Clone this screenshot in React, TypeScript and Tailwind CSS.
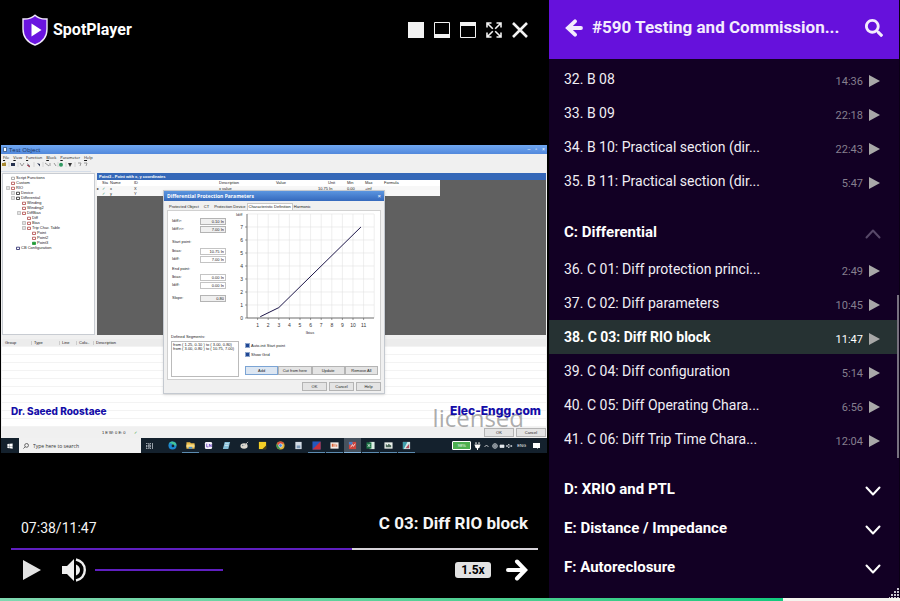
import { useState } from 'react';
import type { ReactNode } from 'react';
import { FaSearch, FaWindows, FaPlug } from 'react-icons/fa';

const lessonsB = [
  { id: 32, title: 'B 08', time: '14:36' },
  { id: 33, title: 'B 09', time: '22:18' },
  { id: 34, title: 'B 10: Practical section (dir...', time: '22:43' },
  { id: 35, title: 'B 11: Practical section (dir...', time: '5:47' },
];

const lessonsC = [
  { id: 36, title: 'C 01: Diff protection princi...', time: '2:49' },
  { id: 37, title: 'C 02: Diff parameters', time: '10:45' },
  { id: 38, title: 'C 03: Diff RIO block', time: '11:47' },
  { id: 39, title: 'C 04: Diff configuration', time: '5:14' },
  { id: 40, title: 'C 05: Diff Operating Chara...', time: '6:56' },
  { id: 41, title: 'C 06: Diff Trip Time Chara...', time: '12:04' },
];

type Lesson = { id: number; title: string; time: string };

function LessonRow({ lesson, active, onSelect }: { lesson: Lesson; active: boolean; onSelect: () => void }) {
  return (
    <li>
      <button
        onClick={onSelect}
        className={
          active
            ? 'flex h-[34px] w-full items-center bg-[#263233] pl-[15px] pr-[19px] text-left font-bold text-white'
            : 'flex h-[34px] w-full items-center pl-[15px] pr-[19px] text-left text-[#f0eef4]'
        }
      >
        <span className="flex-1 truncate text-[14px] leading-5">
          {lesson.id}. {lesson.title}
        </span>
        <span className={active ? 'pt-1.5 text-[11px] font-normal' : 'pt-1.5 text-[11px] text-[#857f8e]'}>{lesson.time}</span>
        <svg className="ml-1.5 mt-1 h-3 w-[11px]" viewBox="0 0 11 12">
          <path d="M0 0L11 6L0 12Z" fill="#a8a8a8" />
        </svg>
      </button>
    </li>
  );
}

function SectionHeader({ title, open = false }: { title: string; open?: boolean }) {
  return (
    <button className="flex h-[39px] w-full items-center justify-between pb-0.5 pl-[15px] pr-[18px] text-left">
      <span className="text-[15px] font-bold leading-5 text-white">{title}</span>
      <svg className="mt-1 h-2.5 w-4" viewBox="0 0 16 10" fill="none" strokeWidth="2" strokeLinecap="round" strokeLinejoin="round">
        {open ? <path d="M1.5 8.5L8 1.5L14.5 8.5" stroke="#574868" /> : <path d="M1.5 1.5L8 8.5L14.5 1.5" stroke="#fff" />}
      </svg>
    </button>
  );
}

function Sidebar() {
  const [current, setCurrent] = useState(38);

  return (
    <aside className="relative flex w-[351px] shrink-0 flex-col overflow-hidden border-r border-[#0a0014] bg-[#120024]">
      <header className="mb-[3px] flex h-[59px] items-center bg-[#6611dc] pb-[3px] pl-4 pr-4 text-[#f3ecfd]">
        <button aria-label="Back">
          <svg className="h-[18px] w-[18px]" viewBox="0 0 18 18" fill="none" stroke="currentColor" strokeWidth="3.8" strokeLinecap="round">
            <path d="M16 9H4M10 2.3L2.9 9L10 15.7" />
          </svg>
        </button>
        <h1 className="flex-1 truncate pb-0.5 pl-[9px] text-[17px] font-bold leading-6">#590 Testing and Commission...</h1>
        <button aria-label="Search">
          <FaSearch className="h-[18px] w-[18px]" />
        </button>
      </header>

      <ul>
        {lessonsB.map((l) => (
          <LessonRow key={l.id} lesson={l} active={l.id === current} onSelect={() => setCurrent(l.id)} />
        ))}
      </ul>
      <section className="mt-[15px]">
        <SectionHeader title="C: Differential" open />
        <ul>
          {lessonsC.map((l) => (
            <LessonRow key={l.id} lesson={l} active={l.id === current} onSelect={() => setCurrent(l.id)} />
          ))}
        </ul>
      </section>
      <section className="mt-[14px]">
        <SectionHeader title="D: XRIO and PTL" />
        <SectionHeader title="E: Distance / Impedance" />
        <SectionHeader title="F: Autoreclosure" />
      </section>

      {/* Scroll thumb */}
      <div className="absolute right-0 top-[295px] h-[163px] w-0.5 bg-[#77717f]" />
      {/* Resize grip */}
      <svg className="absolute bottom-0 right-0 h-2.5 w-2.5" viewBox="0 0 10 10" fill="#c9c6cf">
        <path d="M8 0h2v2H8zM5 3h2v2H5zM8 3h2v2H8zM2 6h2v2H2zM5 6h2v2H5zM8 6h2v2H8zM0 9h1v1H0zM2 9h2v1H2zM5 9h2v1H5zM8 9h2v1H8z" />
      </svg>
    </aside>
  );
}

/* ---------- Recorded desktop shown in the video ---------- */

const tree = [
  { label: 'Script Functions', pad: 'pl-[7px]', color: '#999999' },
  { label: 'Custom', pad: 'pl-[7px]', color: '#b04848' },
  { label: 'RIO', pad: 'pl-[7px]', box: true, color: '#b04848' },
  { label: 'Device', pad: 'pl-[12px]', box: true, color: '#222222' },
  { label: 'Differential', pad: 'pl-[12px]', box: true, color: '#222222' },
  { label: 'Winding', pad: 'pl-[18px]', color: '#b04848' },
  { label: 'Winding2', pad: 'pl-[18px]', color: '#b04848' },
  { label: 'DiffBias', pad: 'pl-[18px]', box: true, color: '#b04848' },
  { label: 'Diff', pad: 'pl-[23px]', color: '#b04848' },
  { label: 'Bias', pad: 'pl-[23px]', box: true, color: '#b04848' },
  { label: 'Trip Char. Table', pad: 'pl-[23px]', box: true, color: '#b04848' },
  { label: 'Point', pad: 'pl-[28px]', color: '#b04848' },
  { label: 'Point2', pad: 'pl-[28px]', color: '#b04848' },
  { label: 'Point3', pad: 'pl-[28px]', color: '#1f9a35' },
  { label: 'CB Configuration', pad: 'pl-[12px]', color: '#222266' },
];

function TreeNode({ label, pad, box, color }: { label: string; pad: string; box?: boolean; color: string }) {
  return (
    <li className={`flex h-[5px] items-center ${pad}`}>
      <svg className="-ml-1 mr-px h-1 w-[9px] shrink-0" viewBox="0 0 9 4" fill="none">
        {box && <path d="M.5 .5h3v3h-3zM1 2h2" stroke="#888" strokeWidth=".5" />}
        <path d="M5.5 1.2h3v2.3h-3z" stroke={color} strokeWidth=".8" fill={color === '#1f9a35' ? color : 'none'} />
      </svg>
      {label}
    </li>
  );
}

function Field({ label, value, off }: { label: string; value: string; off?: boolean }) {
  return (
    <label className="flex h-2 items-center justify-between">
      {label}
      <input
        readOnly
        value={value}
        className={
          off
            ? 'h-[7px] w-[26px] border border-[#b4b4b4] bg-[#f0f0f0] pr-px text-right leading-none'
            : 'h-[7px] w-[26px] border border-[#c4c4c4] bg-white pr-px text-right leading-none'
        }
      />
    </label>
  );
}

function TinyButton({ children, className = 'border-[#b4b4b4] bg-[#e4e4e4]' }: { children: ReactNode; className?: string }) {
  return <button className={`flex h-[9px] items-center justify-center border leading-none ${className}`}>{children}</button>;
}

function TinyCheck({ label }: { label: string }) {
  return (
    <label className="flex h-[9px] items-center gap-px">
      <input type="checkbox" defaultChecked className="h-[5px] w-[5px] appearance-none border border-[#8fa6cc] bg-white checked:bg-[#1f4795]" />
      {label}
    </label>
  );
}

function Chart() {
  const px = (v: number) => 13 + v * 10.6;
  const py = (v: number) => 107 - v * 13;
  const xs = [1, 2, 3, 4, 5, 6, 7, 8, 9, 10, 11];
  const ys = [0, 1, 2, 3, 4, 5, 6, 7];
  return (
    <svg className="h-[124px] w-[146px]" viewBox="0 0 146 124" fontSize="5" fill="#333">
      {[...xs, 12].map((v) => (
        <path key={`x${v}`} d={`M${px(v)} 3V107`} stroke="#e2e2e2" strokeWidth=".6" />
      ))}
      {[...ys, 8].map((v) => (
        <path key={`y${v}`} d={`M13 ${py(v)}H140`} stroke="#e2e2e2" strokeWidth=".6" />
      ))}
      <path d="M13 3V107H140" fill="none" stroke="#555" strokeWidth=".8" />
      {xs.map((v) => (
        <g key={v}>
          <path d={`M${px(v)} 107v2`} stroke="#555" strokeWidth=".6" />
          <text x={px(v)} y="116" textAnchor="middle">{v}</text>
        </g>
      ))}
      {ys.map((v) => (
        <g key={v}>
          <path d={`M11 ${py(v)}h2`} stroke="#555" strokeWidth=".6" />
          <text x="9" y={py(v) + 1.5} textAnchor="end">{v}</text>
        </g>
      ))}
      <text x="2" y="5" fontSize="4">Idiff</text>
      <text x="76" y="123" fontSize="4" textAnchor="middle">Ibias</text>
      <path
        d={`M${px(1.25)} ${py(0.1)}L${px(3)} ${py(0.8)}L${px(10.75)} ${py(7)}`}
        fill="none"
        stroke="#1c1548"
        strokeWidth="1"
      />
    </svg>
  );
}

function ParametersDialog() {
  return (
    <div className="absolute left-[162px] top-[45px] w-[222px] border border-[#c4c9d0] bg-[#f0f0f0] text-[4px] leading-none text-[#222] shadow">
      <div className="flex h-[10px] items-center justify-between bg-gradient-to-b from-[#5b95e0] to-[#3569bd] px-[3px] text-white">
        <span className="font-['Open_Sans',sans-serif] text-[5px] font-bold">Differential Protection Parameters</span>
        <span className="text-[6px]">×</span>
      </div>
      <div className="px-[3px]">
        <div className="mt-[2px] flex h-[7px] items-center gap-[5px] whitespace-nowrap pl-[2px]">
          <span>Protected Object</span>
          <span>CT</span>
          <span>Protection Device</span>
          <span className="-mx-1 flex h-[7px] items-center border border-b-0 border-[#c8c8c8] bg-white px-px">Characteristic Definition</span>
          <span>Harmonic</span>
        </div>
        <div className="h-[170px] border border-[#d0d0d0] bg-white">
          <div className="flex justify-between pl-[4px]">
            <div className="w-[54px] pt-[6px]">
              <Field label="Idiff>:" value="0.10 In" off />
              <Field label="Idiff>>:" value="7.00 In" off />
              <p className="mt-[7px] h-[7px]">Start point:</p>
              <Field label="Ibias:" value="10.75 In" />
              <Field label="Idiff:" value="7.00 In" />
              <p className="mt-[4px] h-[6px]">End point:</p>
              <Field label="Ibias:" value="0.00 In" />
              <Field label="Idiff:" value="0.00 In" />
              <div className="mt-[5px]">
                <Field label="Slope:" value="0.80" off />
              </div>
            </div>
            <Chart />
          </div>
          <div className="flex gap-[6px] pl-[3px]">
            <label>
              <span className="block h-[6px]">Defined Segments:</span>
              <textarea
                readOnly
                rows={2}
                value={'from ( 1.25, 0.10 ) to ( 3.00, 0.80)\nfrom ( 3.00, 0.80 ) to ( 10.75, 7.00)'}
                className="block h-9 w-[68px] resize-none overflow-hidden border border-[#bbb] bg-white p-px leading-[4px]"
              />
            </label>
            <div className="flex-1 pt-[6px]">
              <TinyCheck label="Auto-init Start point" />
              <TinyCheck label="Show Grid" />
              <div className="mt-[7px] grid grid-cols-4 pr-[2px]">
                <TinyButton className="border-[#7ba4d4] bg-[#dce6f2]">Add</TinyButton>
                <TinyButton>Cut from here</TinyButton>
                <TinyButton>Update</TinyButton>
                <TinyButton>Remove All</TinyButton>
              </div>
            </div>
          </div>
        </div>
        <div className="grid h-[13px] grid-cols-[25px_25px_25px] content-center justify-end gap-[2px]">
          <TinyButton>OK</TinyButton>
          <TinyButton>Cancel</TinyButton>
          <TinyButton>Help</TinyButton>
        </div>
      </div>
    </div>
  );
}

const taskIcons: { name: string; open?: boolean; active?: boolean; art: ReactNode }[] = [
  { name: 'Edge', art: <><circle cx="5" cy="5" r="4.5" fill="#1e88d2" /><path d="M1 4a4.2 4.2 0 0 1 8.3 1H5a2 2 0 0 0-4-1z" fill="#43c59a" /><circle cx="5.5" cy="5.5" r="1.5" fill="#14212d" /></> },
  { name: 'Explorer', open: true, art: <><path d="M.5 1.5h4l1 1h4v6h-9z" fill="#e9b949" /><path d="M.5 4h9v3h-9z" fill="#f8dc84" /><path d="M3 6.5h4v2H3z" fill="#4c92cf" /></> },
  { name: 'Editor', art: <><rect x="1" y="1" width="8" height="8" rx="1.5" fill="#f4f1fa" /><path d="M3 3v3.500h2M6 6.500v-3l2 3v-3" stroke="#5a31b8" strokeWidth=".8" fill="none" /></> },
  { name: 'Notes', art: <><path d="M3 1h6L7 9H1z" fill="#86bfd8" /><path d="M3.5 3h4M3 5h4" stroke="#e8f4fa" strokeWidth=".7" /></> },
  { name: 'Paint', art: <><ellipse cx="4.5" cy="5.5" rx="4" ry="3" fill="#dcd8cf" /><path d="M5 5L9 1" stroke="#b8b8b8" /><circle cx="3" cy="5" r=".8" fill="#6f8695" /></> },
  { name: 'Sticky', art: <><path d="M1 1h8v8H1z" fill="#f4cf26" /><path d="M9 5v4H5z" fill="#4c3e12" /></> },
  { name: 'Chrome', art: <><circle cx="5" cy="5" r="4.5" fill="#e0b43a" /><path d="M1 3a4.5 4.5 0 0 1 8 0H5L3.5 6z" fill="#db4b3c" /><path d="M1 3l2.5 4L5 9.5A4.5 4.5 0 0 1 1 3z" fill="#369a57" /><circle cx="5" cy="5" r="2" fill="#4a88e0" stroke="#fff" strokeWidth=".6" /></> },
  { name: 'Viewer', art: <><path d="M1.5 1h7v8h-7z" fill="#d3dce5" /><path d="M3 5h4v3H3z" fill="#7997b5" /></> },
  { name: 'Tester', open: true, art: <><path d="M.5.5h9v9h-9z" fill="#2458bd" /><path d="M9.5.5v9h-9z" fill="#c9303b" /></> },
  { name: 'Report', open: true, art: <><path d="M.5 1.5h9v7h-9z" fill="#f5ece6" /><path d="M2 3h2v3.5H2zM5 3h1v3.5H5zM7 4h1v2.5H7z" fill="#d66033" /></> },
  { name: 'Test Object', open: true, active: true, art: <><path d="M1 1h8v8H1z" fill="#d0443c" /><path d="M1 1h4v3H1z" fill="#487fc8" /><path d="M3 7l2-3 1 2 2-3" stroke="#fff" fill="none" strokeWidth=".8" /></> },
  { name: 'Excel', open: true, art: <><path d="M4 1h5.5v8H4z" fill="#dcefe3" /><path d="M.5 1.5H6v7H.5z" fill="#1d7546" /><path d="M2 3.5l2.5 3M4.5 3.5L2 6.5" stroke="#fff" strokeWidth=".8" /></> },
  { name: 'Reader', open: true, art: <><path d="M.5 1.5h9v7h-9z" fill="#e9eee9" /><path d="M2 3l2 2 1-2 3 2v2H2z" fill="#4b6859" /></> },
  { name: 'Scope', open: true, art: <><path d="M1 1h8v8H1z" fill="#cfe9e8" /><path d="M1 1h5L2 9H1z" fill="#3f9eaa" /><path d="M4 8l4-5v5z" fill="#b04a57" /></> },
];

function Taskbar() {
  return (
    <div className="flex h-[15px] items-center bg-[#14212d] pr-[7px] text-[5px] leading-none text-white">
      <button aria-label="Start" className="flex w-[18px] justify-center">
        <FaWindows className="h-1.5 w-1.5" />
      </button>
      <label className="flex h-[15px] w-[122px] items-center gap-[4px] bg-[#f1f1f1] pl-[4px] text-[#444]">
        <svg className="h-1.5 w-1.5" viewBox="0 0 6 6" fill="none" stroke="#333" strokeWidth=".7">
          <circle cx="3.6" cy="2.4" r="1.9" />
          <path d="M2.2 3.8L.4 5.600" />
        </svg>
        <input
          placeholder="Type here to search"
          className="w-[80px] font-['Open_Sans',sans-serif] text-[5px] leading-none placeholder:text-[#333]"
        />
      </label>
      <svg className="ml-[5px] mr-[11px] h-1.5 w-[7px]" viewBox="0 0 7 6" fill="none" stroke="#cfd6dc" strokeWidth=".7">
        <path d="M.5 0v1M.5 2v2.500M.5 5v1M2 0v1h2.500V0M2 2.300h2.500v1.500H2zM2 6V5h2.500v1M6.500 0v6" />
      </svg>
      {taskIcons.map((t) => (
        <button
          key={t.name}
          aria-label={t.name}
          className={
            t.active
              ? 'mr-px flex h-[15px] w-[17px] items-center justify-center border-b border-[#83b4dc] bg-[#46525e]'
              : t.open
                ? 'mr-px flex h-[15px] w-[17px] items-center justify-center border-b border-[#5c8bb0]'
                : 'mr-px flex h-[15px] w-[17px] items-center justify-center'
          }
        >
          <svg className="h-[9px] w-[9px]" viewBox="0 0 10 10">{t.art}</svg>
        </button>
      ))}
      <div className="ml-auto flex items-center gap-[3px]">
        <span className="flex h-[9px] w-[19px] items-center justify-center rounded-[1px] border border-white bg-[#4caf50] text-[4px]">98%</span>
        <FaPlug className="h-2 w-[7px]" />
        <svg className="h-1 w-[5px]" viewBox="0 0 5 4" fill="none" stroke="#fff" strokeWidth=".7"><path d="M.5 3L2.5 1l2 2" /></svg>
        <svg className="h-1.5 w-[22px]" viewBox="0 10 22 6" fill="none" stroke="#e4e8ec" strokeWidth=".7">
          <circle cx="3" cy="13" r="2.3" />
          <path d="M.7 13h4.6M3 10.7v4.6M14.5 12.5h1l1.5-1.500v4l-1.5-1.5h-1zM18.5 12l1.5 2M20 12l-1.5 2" />
          <path d="M8 12h4v2.500H8z" fill="#e4e8ec" />
        </svg>
        <span className="text-[4px]">ENG</span>
        <svg className="ml-[4px] h-1.5 w-[7px]" viewBox="0 0 7 6" fill="#fff"><path d="M0 0h7v5H5v1L4 5H0z" /></svg>
      </div>
    </div>
  );
}

function VideoFrame() {
  return (
    <div className="relative mx-px overflow-hidden bg-[#f0f0f0] font-['Liberation_Sans',sans-serif] text-[4px] leading-none text-[#222]">
      <div className="flex h-[9px] items-center justify-between bg-gradient-to-b from-[#70a8f2] to-[#5288dc] px-[2px] text-[#14305c]">
        <span className="flex items-center gap-[2px] font-['Open_Sans',sans-serif] text-[6px]">
          <span className="h-[5px] w-1 border border-[#4a6d9a] bg-white" />
          Test Object
        </span>
        <span className="flex items-center gap-[5px] text-[5px] text-white">
          <span>–</span>
          <span>▫</span>
          <span>×</span>
        </span>
      </div>
      <nav className="flex h-[7px] items-center gap-[4px] pl-[2px] font-['Open_Sans',sans-serif] text-[#111]">
        {['File', 'View', 'Function', 'Block', 'Parameter', 'Help'].map((m) => (
          <button key={m}><span className="underline">{m[0]}</span>{m.slice(1)}</button>
        ))}
      </nav>
      <svg className="h-[12px] w-[90px]" viewBox="0 0 90 12">
        <path d="M1 2h4v3H1zM3 1.5h2v1H3z" fill="#a88932" />
        <path d="M10 2h4v3h-4zM26 2l3 3-1 1zM36 2l3 1v2.500z" fill="#27324f" />
        <path d="M19 2l2 3 2-3M44 2l4 3M49 2v3M53 2l2 3M77 2h3l-1 3M83 2h3l-1 3" fill="none" stroke="#999" />
        <path d="M26 4l3 2" stroke="#b43c4b" />
        <circle cx="60" cy="3.8" r="2" fill="#2f9960" />
        <path d="M67 2h4l-2 4z" fill="#333" />
        <path d="M8 1v5M17 1v5M33 1v5M42 1v5M57 1v5M65 1v5M74 1v5" stroke="#bbb" strokeWidth=".5" />
        <path d="M0 10.5h90" stroke="#d5dde8" />
      </svg>

      <div className="flex h-[162px] gap-[2px] px-px">
        <ul className="w-[93px] border border-[#c8ccd2] bg-white pt-px">
          {tree.map((n) => (
            <TreeNode key={n.label} {...n} />
          ))}
        </ul>
        <div className="min-w-0 flex-1 bg-[#606060]">
          <p className="flex h-[7px] items-center bg-[#3568b8] pl-[2px] font-bold text-white">Point3 - Point with x, y coordinates</p>
          <table className="w-[343px] table-fixed bg-[#f7f7f7] text-left">
            <thead>
              <tr className="h-[6px] bg-white">
                <th className="w-[5px]" />
                <th className="w-[8px] font-normal">Sta</th>
                <th className="w-[24px] font-normal">Name</th>
                <th className="w-[85px] font-normal">ID</th>
                <th className="w-[57px] font-normal">Description</th>
                <th className="w-[52px] font-normal">Value</th>
                <th className="w-[19px] font-normal">Unit</th>
                <th className="w-[18px] font-normal">Min</th>
                <th className="w-[19px] font-normal">Max</th>
                <th className="font-normal">Formula</th>
              </tr>
            </thead>
            <tbody>
              <tr className="h-[5px]">
                <td>▸</td><td className="text-[#1f8f6a]">✓</td><td>x</td><td>X</td><td>x value</td>
                <td className="text-right">10.75</td><td>&nbsp;In</td><td>0.00</td><td>+inf</td><td />
              </tr>
              <tr className="h-[5px]">
                <td /><td className="text-[#1f8f6a]">✓</td><td>y</td><td>Y</td><td colSpan={6} />
              </tr>
            </tbody>
          </table>
        </div>
      </div>

      <div className="mx-px mt-[4px] h-[88px] bg-white bg-[repeating-linear-gradient(to_bottom,transparent_0px,transparent_7px,#f3f3f3_7px,#f3f3f3_8px)]">
        <div className="flex h-[7px] items-center bg-[#ececec]">
          <span className="w-[29px] pl-[3px]">Group</span>
          <span className="w-[28px] border-l border-[#ccc] pl-[2px]">Type</span>
          <span className="w-[17px] border-l border-[#ccc] pl-[2px]">Line</span>
          <span className="w-[17px] border-l border-[#ccc] pl-[2px]">Colu..</span>
          <span className="border-l border-[#ccc] pl-[2px]">Description</span>
        </div>
      </div>

      <div className="flex h-[11px] items-center justify-between pr-px">
        <span className="flex items-center gap-[8px] pl-[101px]">
          1 E W: 0 E: 0
          <span className="text-[#1f9a35]">✓</span>
        </span>
        <div className="grid grid-cols-[30px_30px] gap-[2px]">
          <TinyButton>OK</TinyButton>
          <TinyButton>Cancel</TinyButton>
        </div>
      </div>

      <Taskbar />

      <ParametersDialog />

      {/* Watermarks over the recording */}
      <span className="absolute bottom-[25px] right-[23px] font-['Open_Sans',sans-serif] text-[24px] leading-[20px] text-[#888888]/70">licensed</span>
      <span className="absolute bottom-[34px] right-[6px] font-['Inter',sans-serif] text-[12px] font-extrabold leading-4 text-[#140da8]">Elec-Engg.com</span>
      <span className="absolute bottom-[34px] left-[10px] font-['Inter',sans-serif] text-[10px] font-extrabold leading-4 text-[#140da8]">Dr. Saeed Roostaee</span>
    </div>
  );
}

/* ---------- Player ---------- */

function WindowButton({ label, children }: { label: string; children: ReactNode }) {
  return (
    <button aria-label={label}>
      <svg className="h-4 w-4" viewBox="0 0 16 16" fill="none" stroke="#f2f2f2">{children}</svg>
    </button>
  );
}

function RangeBar({ label, value, max, onChange, className }: {
  label: string;
  value: number;
  max: number;
  onChange: (v: number) => void;
  className: string;
}) {
  const pct = (value / max) * 100;
  return (
    <input
      type="range"
      aria-label={label}
      min={0}
      max={max}
      value={value}
      onChange={(e) => onChange(Number(e.target.value))}
      className={`block h-[2px] appearance-none [&::-webkit-slider-thumb]:h-0 [&::-webkit-slider-thumb]:w-0 [&::-webkit-slider-thumb]:appearance-none ${className}`}
      style={{ background: `linear-gradient(to right, #5f1fc0 ${pct}%, #d6d3d9 ${pct}%)` }}
    />
  );
}

function Player() {
  const [position, setPosition] = useState(458);
  const [volume, setVolume] = useState(100);

  return (
    <main className="flex min-w-0 flex-1 flex-col bg-black">
      <header className="flex h-[60px] items-center justify-between pl-[22px] pr-[21px]">
        <div className="flex items-center gap-[5px]">
          <svg className="h-8 w-[26px]" viewBox="0 0 26 32">
            <path d="M13 1.2C10 4 5.5 5.2 1 5V15C1 22.5 5.5 28.3 13 31C20.5 28.3 25 22.5 25 15V5C20.5 5.2 16 4 13 1.2Z" fill="#6a14e0" stroke="#f0e8fb" strokeWidth="1.4" />
            <path d="M9.5 9.5L19.5 16L9.5 22.5Z" fill="#fff" />
          </svg>
          <span className="text-[16px] font-bold leading-5 text-white">SpotPlayer</span>
        </div>
        <div className="flex gap-2.5">
          <WindowButton label="Video only"><path d="M0 0h16v16H0z" fill="#f2f2f2" stroke="none" /></WindowButton>
          <WindowButton label="Minimize"><path d="M.5.5h15v15H.5z" /><path d="M0 12h16v4H0z" fill="#f2f2f2" stroke="none" /></WindowButton>
          <WindowButton label="Maximize"><path d="M.5.5h15v15H.5z" /><path d="M0 0h16v4H0z" fill="#f2f2f2" stroke="none" /></WindowButton>
          <WindowButton label="Full screen">
            <path d="M1 5.5V1H5.5M10.5 1H15V5.5M15 10.5V15H10.5M5.5 15H1V10.5M1 1L6.8 6.8M15 1L9.2 6.8M15 15L9.2 9.2M1 15L6.8 9.2" strokeWidth="1.6" />
          </WindowButton>
          <WindowButton label="Close"><path d="M1 1L15 15M15 1L1 15" strokeWidth="2.6" /></WindowButton>
        </div>
      </header>

      <div className="pr-px pt-[85px]">
        <VideoFrame />
      </div>

      <footer className="mt-auto px-[11px] pb-4">
        <div className="flex items-center justify-between px-[10px] text-[#f5f5f5]">
          <time className="pt-2.5 text-[14px] leading-5">07:38/11:47</time>
          <h2 className="text-[17px] font-bold leading-6">C 03: Diff RIO block</h2>
        </div>
        <RangeBar label="Position" value={position} max={707} onChange={setPosition} className="mt-[10px] w-full" />
        <div className="mt-[7px] flex h-[25px] items-center pl-[12px] pr-[10px]">
          <button aria-label="Play">
            <svg className="h-5 w-[18px]" viewBox="0 0 18 20"><path d="M0 0L18 10L0 20Z" fill="#e2e2e2" /></svg>
          </button>
          <button aria-label="Mute" className="ml-[21px]">
            <svg className="h-6 w-6" viewBox="0 0 24 24" fill="#efefef">
              <path d="M0 8H5L12 1V23L5 16H0Z" />
              <path d="M14 6.5C16.5 7.5 18 9.5 18 12S16.5 16.5 14 17.5Z" />
              <path d="M14 1.5C19 2.5 22.8 6.5 22.8 12S19 21.5 14 22.5" fill="none" stroke="#efefef" strokeWidth="2.4" />
            </svg>
          </button>
          <RangeBar label="Volume" value={volume} max={100} onChange={setVolume} className="ml-[9px] w-32" />
          <button className="ml-auto h-4 w-9 rounded-[3px] bg-[#e2e2e2] text-[12px] font-bold leading-4 text-black">1.5x</button>
          <button aria-label="Next" className="ml-[15px]">
            <svg className="h-[22px] w-[22px]" viewBox="0 0 22 22" fill="none" stroke="#fff" strokeWidth="4" strokeLinecap="round">
              <path d="M2 11H17M11 2.5L19.2 11L11 19.5" />
            </svg>
          </button>
        </div>
      </footer>
    </main>
  );
}

export default function App() {
  return (
    <div className="flex h-screen flex-col bg-black font-['Roboto',sans-serif]">
      <div className="flex min-h-0 flex-1">
        <Player />
        <Sidebar />
      </div>
      {/* Download progress */}
      <div className="h-[3px] bg-[#f4f4ee]">
        <div className="h-full w-[87%] bg-gradient-to-r from-[#7fd8b0] to-[#10c97e]" />
      </div>
    </div>
  );
}
